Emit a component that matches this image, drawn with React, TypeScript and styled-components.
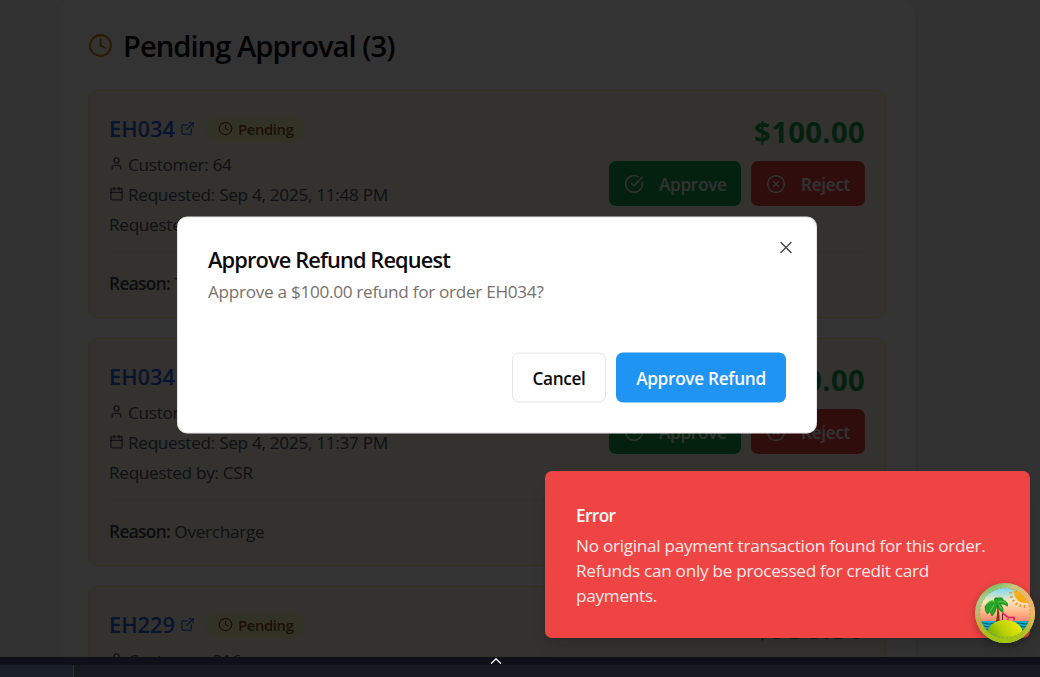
import React from "react";
import styled, { createGlobalStyle } from "styled-components";
import { Calendar, ChevronUp, CircleCheckBig, CircleX, Clock, ExternalLink, User, X } from "lucide-react";

const GlobalStyle = createGlobalStyle`
  * { box-sizing: border-box; }
  body { margin: 0; background: #fafafa; overflow: hidden; }
  body, button { font-family: "Segoe UI", "Open Sans", "Noto Sans", sans-serif; }
  svg { flex: none; display: block; }
`;

const Window = styled.div`
  position: relative;
  width: 1040px;
  height: 677px;
  overflow: hidden;
  display: flex;
  flex-direction: column;
`;

const Page = styled.main`
  position: relative;
  height: 657px;
  flex: none;
  overflow: hidden;
  padding: 0 123px 0 57px;
`;

const Panel = styled.section`
  margin-top: -2px;
  height: 860px;
  padding: 29px 30px;
  background: #fff;
  border: 1px solid #e7e5e4;
  border-radius: 15px;
`;

const PanelTitle = styled.h2`
  display: flex;
  align-items: center;
  gap: 10px;
  height: 35px;
  margin: 0 0 27px;
  color: #0a0a0a;
  font-size: 29.2px;
  font-weight: 600;
  letter-spacing: -1px;
  white-space: nowrap;
  svg { color: #ca8a04; }
`;

const Cards = styled.div`
  display: flex;
  flex-direction: column;
  gap: 20px;
`;

const Card = styled.article`
  height: 228px;
  padding: 20px;
  background: #fef9e8;
  border: 1px solid #fbe88a;
  border-radius: 10px;
`;

const CardTop = styled.div`
  display: flex;
  justify-content: space-between;
  height: 141px;
`;

const Details = styled.div`
  display: flex;
  flex-direction: column;
`;

const OrderRow = styled.div`
  display: flex;
  align-items: center;
  height: 35px;
  margin-bottom: 3px;
`;

const OrderLink = styled.a`
  display: flex;
  align-items: center;
  gap: 5px;
  color: #2563eb;
  font-size: 21.8px;
  font-weight: 600;
  letter-spacing: 0.02px;
`;

const Badge = styled.span`
  display: flex;
  align-items: center;
  gap: 5px;
  height: 26px;
  margin-left: 11px;
  padding: 0 12px;
  border-radius: 13px;
  background: #fef9c3;
  color: #854d0e;
  font-size: 14.7px;
  font-weight: 600;
  letter-spacing: -0.3px;
`;

const DetailRow = styled.div`
  display: flex;
  align-items: center;
  gap: 4px;
  height: 30px;
  color: #4b5563;
  font-size: 17.2px;
  letter-spacing: -0.3px;
  white-space: nowrap;
  svg { margin-top: -1px; }
`;

const Side = styled.div`
  display: flex;
  flex-direction: column;
  align-items: flex-end;
`;

const Amount = styled.div`
  height: 50px;
  line-height: 43px;
  color: #16a34a;
  font-size: 29.2px;
  font-weight: 700;
  letter-spacing: 0.35px;
`;

const Actions = styled.div`
  display: flex;
  gap: 10px;
`;

const ActionButton = styled.button<{ $tone: "approve" | "reject" }>`
  display: flex;
  align-items: center;
  gap: 15px;
  width: ${(p) => (p.$tone === "approve" ? 132 : 114)}px;
  height: 45px;
  padding: 0 15px;
  border: 0;
  border-radius: 7px;
  background: ${(p) => (p.$tone === "approve" ? "#16a34a" : "#ef4444")};
  color: #fafafa;
  font-size: 17.2px;
  font-weight: 600;
  letter-spacing: -0.3px;
  span { padding-top: 2px; }
`;

const Reason = styled.div`
  border-top: 1px solid #eeecdf;
  padding-top: 18px;
  line-height: 25px;
  color: #4b5563;
  font-size: 17.2px;
  letter-spacing: -0.28px;
  b { font-weight: 600; color: #374151; letter-spacing: -0.6px; }
`;

const Overlay = styled.div`
  position: absolute;
  inset: 0;
  background: rgba(0, 0, 0, 0.8);
`;

const Dialog = styled.div`
  position: absolute;
  left: 177px;
  top: 217px;
  width: 640px;
  height: 217px;
  padding: 29px 30px;
  background: #fff;
  border: 1px solid #e5e5e5;
  border-radius: 10px;
  transform: translateY(-0.5px);
`;

const DialogTitle = styled.h3`
  margin: 0;
  line-height: 26px;
  color: #0c0a09;
  font-size: 21.8px;
  font-weight: 600;
  letter-spacing: -0.87px;
`;

const DialogText = styled.p`
  margin: 6px 0 0;
  line-height: 25px;
  color: #78716c;
  font-size: 17.2px;
  letter-spacing: -0.31px;
`;

const DialogActions = styled.div`
  display: flex;
  justify-content: flex-end;
  gap: 10px;
  margin-top: 49px;
`;

const DialogButton = styled.button<{ $primary?: boolean }>`
  width: ${(p) => (p.$primary ? 170 : 94)}px;
  height: 50px;
  padding: 0;
  border: ${(p) => (p.$primary ? "0" : "1px solid #e7e5e4")};
  border-radius: 7px;
  background: ${(p) => (p.$primary ? "#2094f3" : "#fff")};
  color: ${(p) => (p.$primary ? "#f8fafc" : "#0c0a09")};
  font-size: 17.2px;
  font-weight: 600;
  letter-spacing: -0.3px;
  white-space: nowrap;
`;

const CloseButton = styled.button`
  position: absolute;
  top: 20px;
  right: 20px;
  padding: 0;
  border: 0;
  background: none;
  color: #484746;
`;

const Toast = styled.div`
  position: absolute;
  left: 545px;
  top: 471px;
  width: 485px;
  height: 167px;
  padding: 32px 31px;
  border-radius: 7px;
  background: #ef4444;
  color: #fafafa;
  box-shadow: 0 12px 19px -4px rgba(0, 0, 0, 0.1), 0 5px 8px -5px rgba(0, 0, 0, 0.1);
  font-size: 17.2px;
  line-height: 25px;
  white-space: nowrap;
  strong { display: block; font-weight: 600; letter-spacing: -0.6px; }
  p { margin: 5px 0 0; opacity: 0.9; letter-spacing: -0.29px; }
`;

const Bubble = styled.div`
  position: absolute;
  left: 975px;
  top: 583px;
  width: 60px;
  height: 60px;
  border-radius: 50%;
  box-shadow: 0 3px 8px rgba(0, 0, 0, 0.3);
`;

const Footer = styled.footer`
  display: flex;
  height: 20px;
  border-top: 8px solid #10101a;
  background: #181821;
`;

const FooterTab = styled.div`
  width: 74px;
  background: #1a1e28;
  border-right: 1px solid #2e2f3a;
`;

const FooterToggle = styled.div`
  position: absolute;
  left: 487px;
  top: 652px;
  color: #f4f4f5;
`;

const rays = [92, 109, 126, 143, 160, 177, 194];

function IslandLogo() {
  return (
    <svg width="60" height="60" viewBox="0 0 60 60">
      <defs>
        <linearGradient id="ring" x1="0.2" y1="0" x2="0.6" y2="1">
          <stop offset="0" stopColor="#6fae43" />
          <stop offset="0.2" stopColor="#a4d08c" />
          <stop offset="0.5" stopColor="#cfa36a" />
          <stop offset="0.78" stopColor="#a6b52a" />
          <stop offset="1" stopColor="#a5cb12" />
        </linearGradient>
        <linearGradient id="ringRight" x1="0" y1="0" x2="1" y2="0">
          <stop offset="0.4" stopColor="#f8c172" stopOpacity="0" />
          <stop offset="1" stopColor="#f8b36a" />
        </linearGradient>
        <linearGradient id="fadeDown" x1="0" y1="0" x2="0" y2="1">
          <stop offset="0.5" stopColor="#a2c313" stopOpacity="0" />
          <stop offset="0.95" stopColor="#a2c313" />
        </linearGradient>
        <linearGradient id="sky" x1="0" y1="0" x2="0" y2="1">
          <stop offset="0" stopColor="#7bd8f5" />
          <stop offset="0.27" stopColor="#f5e9bd" />
          <stop offset="0.5" stopColor="#ffb184" />
          <stop offset="0.7" stopColor="#fb7d70" />
        </linearGradient>
        <linearGradient id="sand" x1="0" y1="0.8" x2="1" y2="0.2">
          <stop offset="0" stopColor="#4e9a06" />
          <stop offset="0.5" stopColor="#b5cf07" />
          <stop offset="1" stopColor="#f5ee00" />
        </linearGradient>
        <clipPath id="scene"><circle cx="30" cy="30" r="25" /></clipPath>
      </defs>
      <circle cx="30" cy="30" r="30" fill="url(#ring)" />
      <circle cx="30" cy="30" r="30" fill="url(#ringRight)" />
      <circle cx="30" cy="30" r="30" fill="url(#fadeDown)" />
      <g clipPath="url(#scene)">
        <rect x="5" y="5" width="50" height="50" fill="url(#sky)" />
        <circle cx="50" cy="9" r="11" fill="#fdae17" />
        {rays.map((a) => (
          <path key={a} d="M63 9h3" stroke="#f4923a" strokeWidth="1.5" transform={`rotate(${a} 50 9)`} />
        ))}
        <rect x="5" y="38" width="50" height="17" fill="#10adc4" />
        <path d="M5 40.5q3-1 6 0t6 0 6 0 6 0 6 0 6 0 6 0 8 0M5 43.5q3-1 6 0t6 0 6 0 6 0 6 0 6 0 6 0 8 0M5 46.5h50" fill="none" stroke="#075f7c" strokeWidth="1.2" />
        <path d="M22 20q3 9 2.500 20h-4q2.500-9 1.500-20z" fill="#7b3414" />
        <path d="M20 19Q14 16 10 24Q10 28 12.500 31Q15 29 15.500 26Q15 30 17 33Q21 29 22 22Q24 28 28 29.500Q29 25 25 20.500Q30 21 32.500 23Q33 18 28 17.500Q29 14 23 15Q18 14 20 19Z" fill="#27a52b" stroke="#117516" strokeWidth="0.7" />
        <path d="M20 19Q16 16 12 21M23 19Q27 17 31 20M19 22L15 28M24 22L27 26" fill="none" stroke="#55cd35" strokeWidth="1.1" />
        <path d="M27.500 30l5.500 4.500h6v3" fill="none" stroke="#f01c5e" strokeWidth="1.7" />
        <path d="M27.500 31v6M33 35.500v2" stroke="#551842" strokeWidth="1" />
        <ellipse cx="30" cy="51" rx="18" ry="14" fill="url(#sand)" />
      </g>
      <circle cx="30" cy="30" r="25" fill="none" stroke="#698811" strokeWidth="0.7" strokeDasharray="2 2" opacity="0.45" />
    </svg>
  );
}

type Refund = { order: string; customer: string; requested: string; amount: string; reason: string };

const refunds: Refund[] = [
  { order: "EH034", customer: "64", requested: "Sep 4, 2025, 11:48 PM", amount: "$100.00", reason: "Test" },
  { order: "EH034", customer: "64", requested: "Sep 4, 2025, 11:37 PM", amount: "$100.00", reason: "Overcharge" },
  { order: "EH229", customer: "316", requested: "Sep 4, 2025, 10:52 PM", amount: "$938.50", reason: "Overcharge" },
];

function RefundCard({ refund }: { refund: Refund }) {
  return (
    <Card>
      <CardTop>
        <Details>
          <OrderRow>
            <OrderLink>{refund.order}<ExternalLink size={15} /></OrderLink>
            <Badge><Clock size={15} />Pending</Badge>
          </OrderRow>
          <DetailRow><User size={15} />Customer: {refund.customer}</DetailRow>
          <DetailRow><Calendar size={15} />Requested: {refund.requested}</DetailRow>
          <DetailRow>Requested by: CSR</DetailRow>
        </Details>
        <Side>
          <Amount>{refund.amount}</Amount>
          <Actions>
            <ActionButton $tone="approve"><CircleCheckBig size={20} strokeWidth={1.7} /><span>Approve</span></ActionButton>
            <ActionButton $tone="reject"><CircleX size={20} strokeWidth={1.7} /><span>Reject</span></ActionButton>
          </Actions>
        </Side>
      </CardTop>
      <Reason><b>Reason:</b> {refund.reason}</Reason>
    </Card>
  );
}

export default function App() {
  return (
    <Window>
      <GlobalStyle />
      <Page>
        <Panel>
          <PanelTitle><Clock size={25} />Pending Approval (3)</PanelTitle>
          <Cards>
            {refunds.map((r) => <RefundCard key={r.requested} refund={r} />)}
          </Cards>
        </Panel>
        <Overlay />
      </Page>
      <Footer><FooterTab /></Footer>
      <FooterToggle><ChevronUp size={18} strokeWidth={1.8} /></FooterToggle>
      <Dialog>
        <DialogTitle>Approve Refund Request</DialogTitle>
        <DialogText>Approve a $100.00 refund for order EH034?</DialogText>
        <DialogActions>
          <DialogButton>Cancel</DialogButton>
          <DialogButton $primary>Approve Refund</DialogButton>
        </DialogActions>
        <CloseButton aria-label="Close"><X size={20} strokeWidth={1.8} /></CloseButton>
      </Dialog>
      <Toast>
        <strong>Error</strong>
        <p>No original payment transaction found for this order.<br />Refunds can only be processed for credit card<br />payments.</p>
      </Toast>
      <Bubble><IslandLogo /></Bubble>
    </Window>
  );
}
